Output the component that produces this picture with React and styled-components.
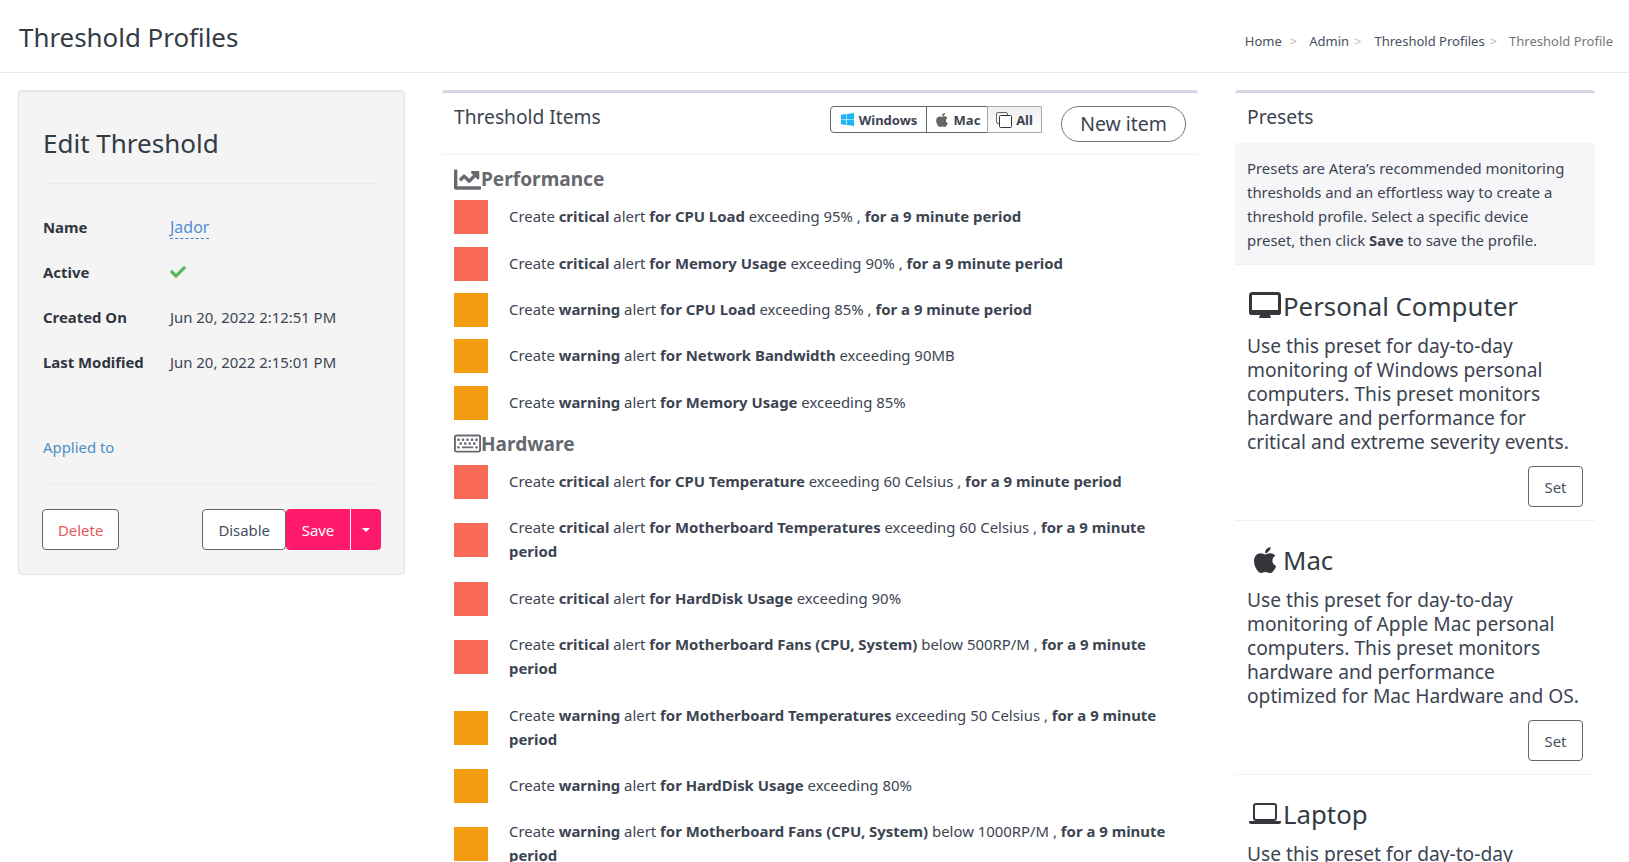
import styled, { createGlobalStyle } from "styled-components";
import { FaApple, FaCheck, FaChartLine, FaRegKeyboard, FaWindows } from "react-icons/fa";

const performanceItems = [
  { level: "critical", target: "CPU Load", rest: "exceeding 95% ,", period: true },
  { level: "critical", target: "Memory Usage", rest: "exceeding 90% ,", period: true },
  { level: "warning", target: "CPU Load", rest: "exceeding 85% ,", period: true },
  { level: "warning", target: "Network Bandwidth", rest: "exceeding 90MB" },
  { level: "warning", target: "Memory Usage", rest: "exceeding 85%" },
];

const hardwareItems = [
  { level: "critical", target: "CPU Temperature", rest: "exceeding 60 Celsius ,", period: true },
  { level: "critical", target: "Motherboard Temperatures", rest: "exceeding 60 Celsius ,", period: true },
  { level: "critical", target: "HardDisk Usage", rest: "exceeding 90%" },
  { level: "critical", target: "Motherboard Fans (CPU, System)", rest: "below 500RP/M ,", period: true },
  { level: "warning", target: "Motherboard Temperatures", rest: "exceeding 50 Celsius ,", period: true },
  { level: "warning", target: "HardDisk Usage", rest: "exceeding 80%" },
  { level: "warning", target: "Motherboard Fans (CPU, System)", rest: "below 1000RP/M ,", period: true },
];

const DesktopIcon = () => (
  <svg width="32" height="28" viewBox="0 0 32 28">
    <rect x="1.5" y="1.5" width="29" height="20" rx="2" fill="none" stroke="currentColor" strokeWidth="3" />
    <path d="M0 18h32v2a3 3 0 0 1-3 3H3a3 3 0 0 1-3-3z" fill="currentColor" />
    <path d="M11 23h10l1 3H10z" fill="currentColor" />
  </svg>
);

const LaptopIcon = () => (
  <svg width="32" height="22" viewBox="0 0 32 22">
    <rect x="5" y="1" width="22" height="16" rx="2" fill="none" stroke="currentColor" strokeWidth="2" />
    <path d="M0 18h32v1a2 2 0 0 1-2 2H2a2 2 0 0 1-2-2z" fill="currentColor" />
  </svg>
);

const CopyIcon = () => (
  <svg width="16" height="16" viewBox="0 0 16 16">
    <rect x="0.5" y="0.5" width="11" height="11" rx="1.5" fill="none" stroke="#666" />
    <rect x="3.5" y="3.5" width="12" height="12" rx="1" fill="#fff" stroke="#33363b" />
  </svg>
);

const ThresholdItem = ({ item }) => (
  <ItemRow>
    <Swatch $level={item.level} />
    <ItemText>
      Create <b>{item.level}</b> alert <b>for {item.target}</b> {item.rest}
      {item.period && <b> for a 9 minute period</b>}
    </ItemText>
  </ItemRow>
);

const App = () => (
  <>
    <GlobalStyle />
    <Page>
      <Header>
        <PageTitle>Threshold Profiles</PageTitle>
        <Breadcrumbs>
          <Crumb>Home</Crumb>
          <Sep $left={8} $right={12}>&gt;</Sep>
          <Crumb>Admin</Crumb>
          <Sep $left={5} $right={13}>&gt;</Sep>
          <Crumb>Threshold Profiles</Crumb>
          <Sep $left={5} $right={12}>&gt;</Sep>
          <Crumb $current>Threshold Profile</Crumb>
        </Breadcrumbs>
      </Header>
      <Columns>
        <EditCard>
          <EditTitle>Edit Threshold</EditTitle>
          <Details>
            <Label>Name</Label>
            <div><NameLink>Jador</NameLink></div>
            <Label>Active</Label>
            <ActiveMark><FaCheck /></ActiveMark>
            <Label>Created On</Label>
            <div>Jun 20, 2022 2:12:51 PM</div>
            <Label>Last Modified</Label>
            <div>Jun 20, 2022 2:15:01 PM</div>
          </Details>
          <AppliedTo>Applied to</AppliedTo>
          <CardActions>
            <OutlineButton $danger>Delete</OutlineButton>
            <ActionGroup>
              <OutlineButton>Disable</OutlineButton>
              <SaveButton>Save</SaveButton>
              <SaveCaret><Caret /></SaveCaret>
            </ActionGroup>
          </CardActions>
        </EditCard>

        <ItemsPanel>
          <ItemsHeader>
            <PanelTitle>Threshold Items</PanelTitle>
            <FilterGroup>
              <FilterButton $width={97}><FaWindows color="#1fb6f2" size={15} />Windows</FilterButton>
              <FilterButton $width={62}><FaApple color="#666" size={16} />Mac</FilterButton>
              <FilterButton $width={55} $active><CopyIcon />All</FilterButton>
            </FilterGroup>
            <NewItem>New item</NewItem>
          </ItemsHeader>
          <Section>
            <SectionTitle><FaChartLine size={27} />Performance</SectionTitle>
            {performanceItems.map((item) => (
              <ThresholdItem key={item.level + item.target} item={item} />
            ))}
          </Section>
          <Section>
            <SectionTitle><FaRegKeyboard size={27} />Hardware</SectionTitle>
            {hardwareItems.map((item) => (
              <ThresholdItem key={item.level + item.target} item={item} />
            ))}
          </Section>
        </ItemsPanel>

        <PresetsPanel>
          <PresetsHead>Presets</PresetsHead>
          <PresetsIntro>
            Presets are Atera’s recommended monitoring<br />
            thresholds and an effortless way to create a<br />
            threshold profile. Select a specific device<br />
            preset, then click <b>Save</b> to save the profile.
          </PresetsIntro>
          <Preset>
            <PresetTitle><PresetIcon><DesktopIcon /></PresetIcon>Personal Computer</PresetTitle>
            <PresetText>
              Use this preset for day-to-day<br />
              monitoring of Windows personal<br />
              computers. This preset monitors<br />
              hardware and performance for<br />
              critical and extreme severity events.
            </PresetText>
            <SetRow><SetButton>Set</SetButton></SetRow>
          </Preset>
          <Preset>
            <PresetTitle><PresetIcon><FaApple size={30} /></PresetIcon>Mac</PresetTitle>
            <PresetText>
              Use this preset for day-to-day<br />
              monitoring of Apple Mac personal<br />
              computers. This preset monitors<br />
              hardware and performance<br />
              optimized for Mac Hardware and OS.
            </PresetText>
            <SetRow><SetButton>Set</SetButton></SetRow>
          </Preset>
          <Preset>
            <PresetTitle><PresetIcon><LaptopIcon /></PresetIcon>Laptop</PresetTitle>
            <PresetText>Use this preset for day-to-day</PresetText>
          </Preset>
        </PresetsPanel>
      </Columns>
    </Page>
  </>
);

const GlobalStyle = createGlobalStyle`
  html, body {
    margin: 0;
    height: 100%;
    overflow: hidden;
    background: #fff;
  }
  body {
    font-family: "Noto Sans", "Open Sans", Arial, sans-serif;
    font-size: 14.9px;
    line-height: 24px;
    color: #3c4452;
  }
  * { box-sizing: border-box; }
  b { font-weight: 700; }
`;

const Page = styled.div`
  height: 862px;
  overflow: hidden;
`;

const Header = styled.header`
  height: 73px;
  padding: 0 16px 0 19px;
  border-bottom: 1px solid #e9e9e9;
  display: flex;
  justify-content: space-between;
  align-items: center;
`;

const PageTitle = styled.h1`
  margin: 2px 0 0;
  font-size: 25.9px;
  font-weight: 400;
  color: #333b45;
`;

const Breadcrumbs = styled.nav`
  display: flex;
  align-items: center;
  font-size: 13px;
  padding-top: 10px;
`;

const Crumb = styled.span`
  color: ${(p) => (p.$current ? "#777" : "#46505f")};
`;

const Sep = styled.span`
  color: #bbb;
  margin: 0 ${(p) => p.$right}px 0 ${(p) => p.$left}px;
`;

const Columns = styled.div`
  display: flex;
  align-items: flex-start;
  padding: 17px 34px 0 18px;
`;

const EditCard = styled.section`
  flex: 0 0 387px;
  height: 485px;
  padding: 0 23px 0 24px;
  background: #f4f4f4;
  border: 1px solid #e3e3e3;
  border-radius: 4px;
  box-shadow: inset 0 1px 1px rgba(0, 0, 0, 0.05);
`;

const EditTitle = styled.h2`
  margin: 0;
  height: 93px;
  padding-top: 34px;
  font-size: 26px;
  line-height: 36px;
  font-weight: 400;
  color: #333b45;
  border-bottom: 1px solid #ececec;
`;

const Details = styled.div`
  display: grid;
  grid-template-columns: 127px 1fr;
  grid-auto-rows: 45px;
  padding-top: 31px;
  align-items: start;
  color: #3c4452;
`;

const Label = styled.div`
  font-weight: 700;
  color: #2f3640;
`;

const NameLink = styled.span`
  color: #4f8fd6;
  font-size: 16px;
  border-bottom: 1px dashed #3f7fc8;
  display: inline-block;
  line-height: 22px;
  padding-top: 1px;
`;

const ActiveMark = styled.div`
  color: #5cb85c;
  font-size: 16px;
  display: flex;
  height: 24px;
  align-items: center;
`;

const AppliedTo = styled.div`
  color: #4f8fc4;
  margin-top: 40px;
  padding-bottom: 25px;
  border-bottom: 1px solid #ececec;
`;

const CardActions = styled.div`
  display: flex;
  justify-content: space-between;
  margin-left: -1px;
  padding-top: 24px;
`;

const ActionGroup = styled.div`
  display: flex;
`;

const OutlineButton = styled.button`
  height: 41px;
  padding: 0 15px;
  font: inherit;
  color: ${(p) => (p.$danger ? "#e25b5b" : "#46505f")};
  background: #fff;
  border: 1px solid #666;
  border-radius: 4px;
`;

const SaveButton = styled.button`
  height: 41px;
  width: 64px;
  font: inherit;
  color: #fff;
  background: #ff1a6b;
  border: 0;
  border-radius: 4px 0 0 4px;
`;

const SaveCaret = styled.button`
  height: 41px;
  width: 31px;
  padding: 0;
  display: flex;
  align-items: center;
  justify-content: center;
  background: #ff1a6b;
  border: 0;
  border-left: 1px solid #fff;
  border-radius: 0 4px 4px 0;
`;

const Caret = styled.span`
  width: 0;
  height: 0;
  border-left: 4px solid transparent;
  border-right: 4px solid transparent;
  border-top: 4px solid #fff;
`;

const ItemsPanel = styled.section`
  flex: 0 0 756px;
  margin-left: 37px;
  border-top: 3px solid #d2d6e0;
  border-radius: 4px 4px 0 0;
`;

const ItemsHeader = styled.div`
  height: 62px;
  margin-bottom: 9px;
  padding: 0 12px;
  border-bottom: 1px solid #f0f0f0;
  display: flex;
  align-items: flex-start;
`;

const PanelTitle = styled.h3`
  margin: 9px 0 0;
  flex: 1;
  font-size: 19.2px;
  line-height: 30px;
  font-weight: 400;
  color: #3c4452;
`;

const FilterGroup = styled.div`
  display: flex;
  margin-top: 13px;
`;

const FilterButton = styled.div`
  width: ${(p) => p.$width}px;
  height: 27px;
  margin-left: -1px;
  display: flex;
  align-items: center;
  justify-content: center;
  gap: 4px;
  font-size: 13px;
  font-weight: 700;
  color: #3c4452;
  border: 1px solid ${(p) => (p.$active ? "#aaa" : "#666")};
  background: ${(p) => (p.$active ? "linear-gradient(#eee, #fff)" : "#fff")};
  &:first-child {
    border-radius: 4px 0 0 4px;
  }
`;

const NewItem = styled.button`
  margin: 13px 0 0 19px;
  width: 125px;
  height: 36px;
  font: inherit;
  font-size: 19.4px;
  color: #3c4452;
  background: #fff;
  border: 1px solid #777;
  border-radius: 18px;
`;

const Section = styled.div`
  padding: 0 12px;
  margin-top: 3px;
`;

const SectionTitle = styled.h4`
  margin: 0;
  height: 30px;
  display: flex;
  align-items: center;
  font-size: 19.1px;
  font-weight: 700;
  color: #666a70;
`;

const ItemRow = styled.div`
  display: flex;
  align-items: center;
`;

const Swatch = styled.span`
  flex: 0 0 34px;
  height: 34px;
  margin-right: 21px;
  background: ${(p) => (p.$level === "critical" ? "#f96a56" : "#f39c12")};
`;

const ItemText = styled.div`
  padding: 10.2px 0 12.2px;
`;

const PresetsPanel = styled.aside`
  flex: 0 0 360px;
  margin-left: 37px;
  border-top: 3px solid #d2d6e0;
  border-radius: 4px 4px 0 0;
`;

const PresetsHead = styled.div`
  height: 50px;
  padding: 9px 12px 0;
  font-size: 19.3px;
  line-height: 30px;
`;

const PresetsIntro = styled.div`
  padding: 13px 12px 12px;
  margin-bottom: 2px;
  background: #f6f6f9;
  border-bottom: 1px solid #f0f0f0;
`;

const Preset = styled.div`
  padding: 19px 12px 13px;
  border-bottom: 1px solid #f0f0f0;
`;

const PresetTitle = styled.div`
  display: flex;
  align-items: center;
  height: 40px;
  font-size: 25.8px;
  color: #333b45;
`;

const PresetIcon = styled.span`
  width: 36px;
  display: flex;
  justify-content: center;
  color: #33363b;
`;

const PresetText = styled.div`
  font-size: 19.2px;
  margin-top: 8px;
  white-space: nowrap;
`;

const SetRow = styled.div`
  display: flex;
  justify-content: flex-end;
  padding-top: 12px;
`;

const SetButton = styled.button`
  width: 55px;
  height: 41px;
  font: inherit;
  color: #46505f;
  background: #fff;
  border: 1px solid #666;
  border-radius: 4px;
`;

export default App;
